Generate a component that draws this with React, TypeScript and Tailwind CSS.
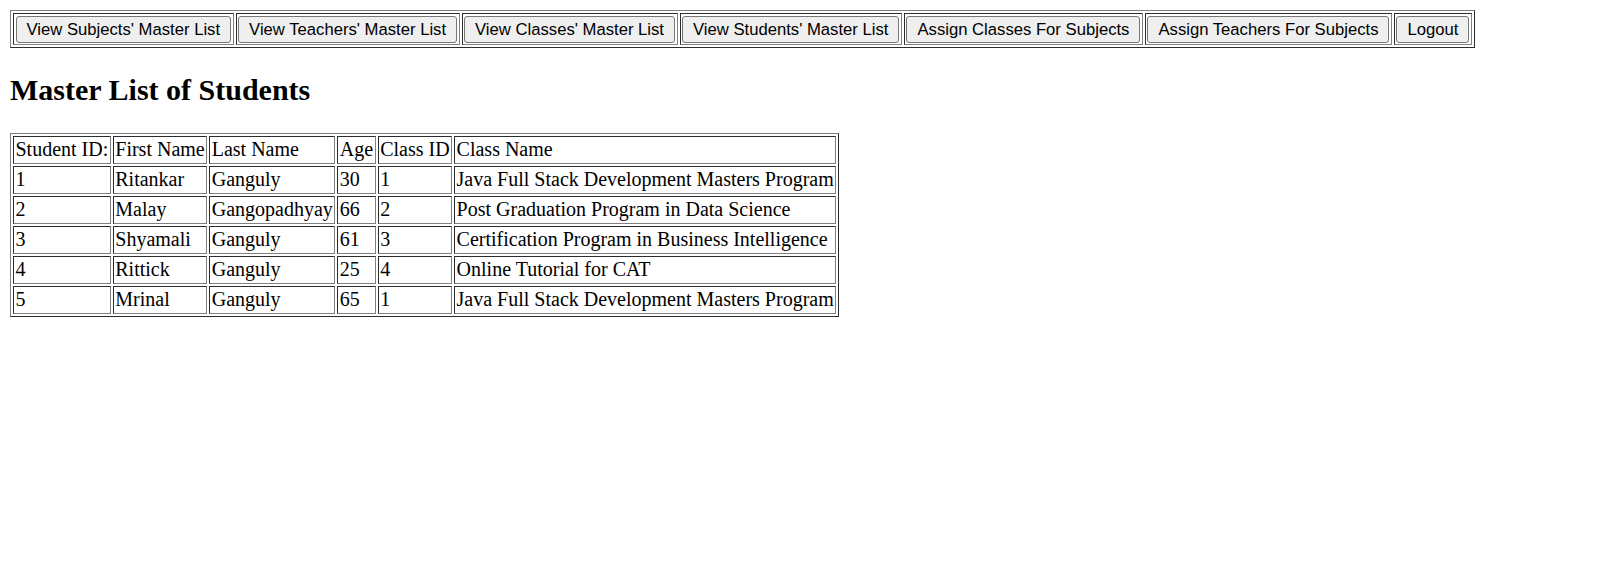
import React from "react";

const navItems = [
  "View Subjects' Master List",
  "View Teachers' Master List",
  "View Classes' Master List",
  "View Students' Master List",
  "Assign Classes For Subjects",
  "Assign Teachers For Subjects",
  "Logout",
];

const headers = ["Student ID:", "First Name", "Last Name", "Age", "Class ID", "Class Name"];

const students = [
  ["1", "Ritankar", "Ganguly", "30", "1", "Java Full Stack Development Masters Program"],
  ["2", "Malay", "Gangopadhyay", "66", "2", "Post Graduation Program in Data Science"],
  ["3", "Shyamali", "Ganguly", "61", "3", "Certification Program in Business Intelligence"],
  ["4", "Rittick", "Ganguly", "25", "4", "Online Tutorial for CAT"],
  ["5", "Mrinal", "Ganguly", "65", "1", "Java Full Stack Development Masters Program"],
];

const App = () => {
  return (
    <div className="m-[10px] bg-white text-black font-['Liberation_Serif','Times_New_Roman',serif] text-[20px] leading-[23.5px]">
      {/* top nav */}
      <table className="border-separate border-spacing-[2.5px] border border-[gray] [border-style:outset]">
        <tbody>
          <tr>
            {navItems.map((item) => (
              <td key={item} className="p-[1.5px] border border-[gray] [border-style:inset]">
                <button
                  type="button"
                  className="bg-[#efefef] border border-[#767676] rounded-[3px] px-[10px] py-[3px] text-[16.67px] leading-[19px] font-['Liberation_Sans',Arial,sans-serif] text-black"
                >
                  {item}
                </button>
              </td>
            ))}
          </tr>
        </tbody>
      </table>

      <h2 className="my-[25px] text-[30px] leading-[34.5px] font-bold">Master List of Students</h2>

      {/* students */}
      <table className="border-separate border-spacing-[2.5px] border border-[gray] [border-style:outset]">
        <tbody>
          <tr>
            {headers.map((h) => (
              <td key={h} className="px-[1.5px] py-[1.25px] border border-[gray] [border-style:inset] whitespace-nowrap">
                {h}
              </td>
            ))}
          </tr>
          {students.map((row) => (
            <tr key={row[0]}>
              {row.map((cell, i) => (
                <td key={i} className="px-[1.5px] py-[1.25px] border border-[gray] [border-style:inset] whitespace-nowrap">
                  {cell}
                </td>
              ))}
            </tr>
          ))}
        </tbody>
      </table>
    </div>
  );
};

export default App;
